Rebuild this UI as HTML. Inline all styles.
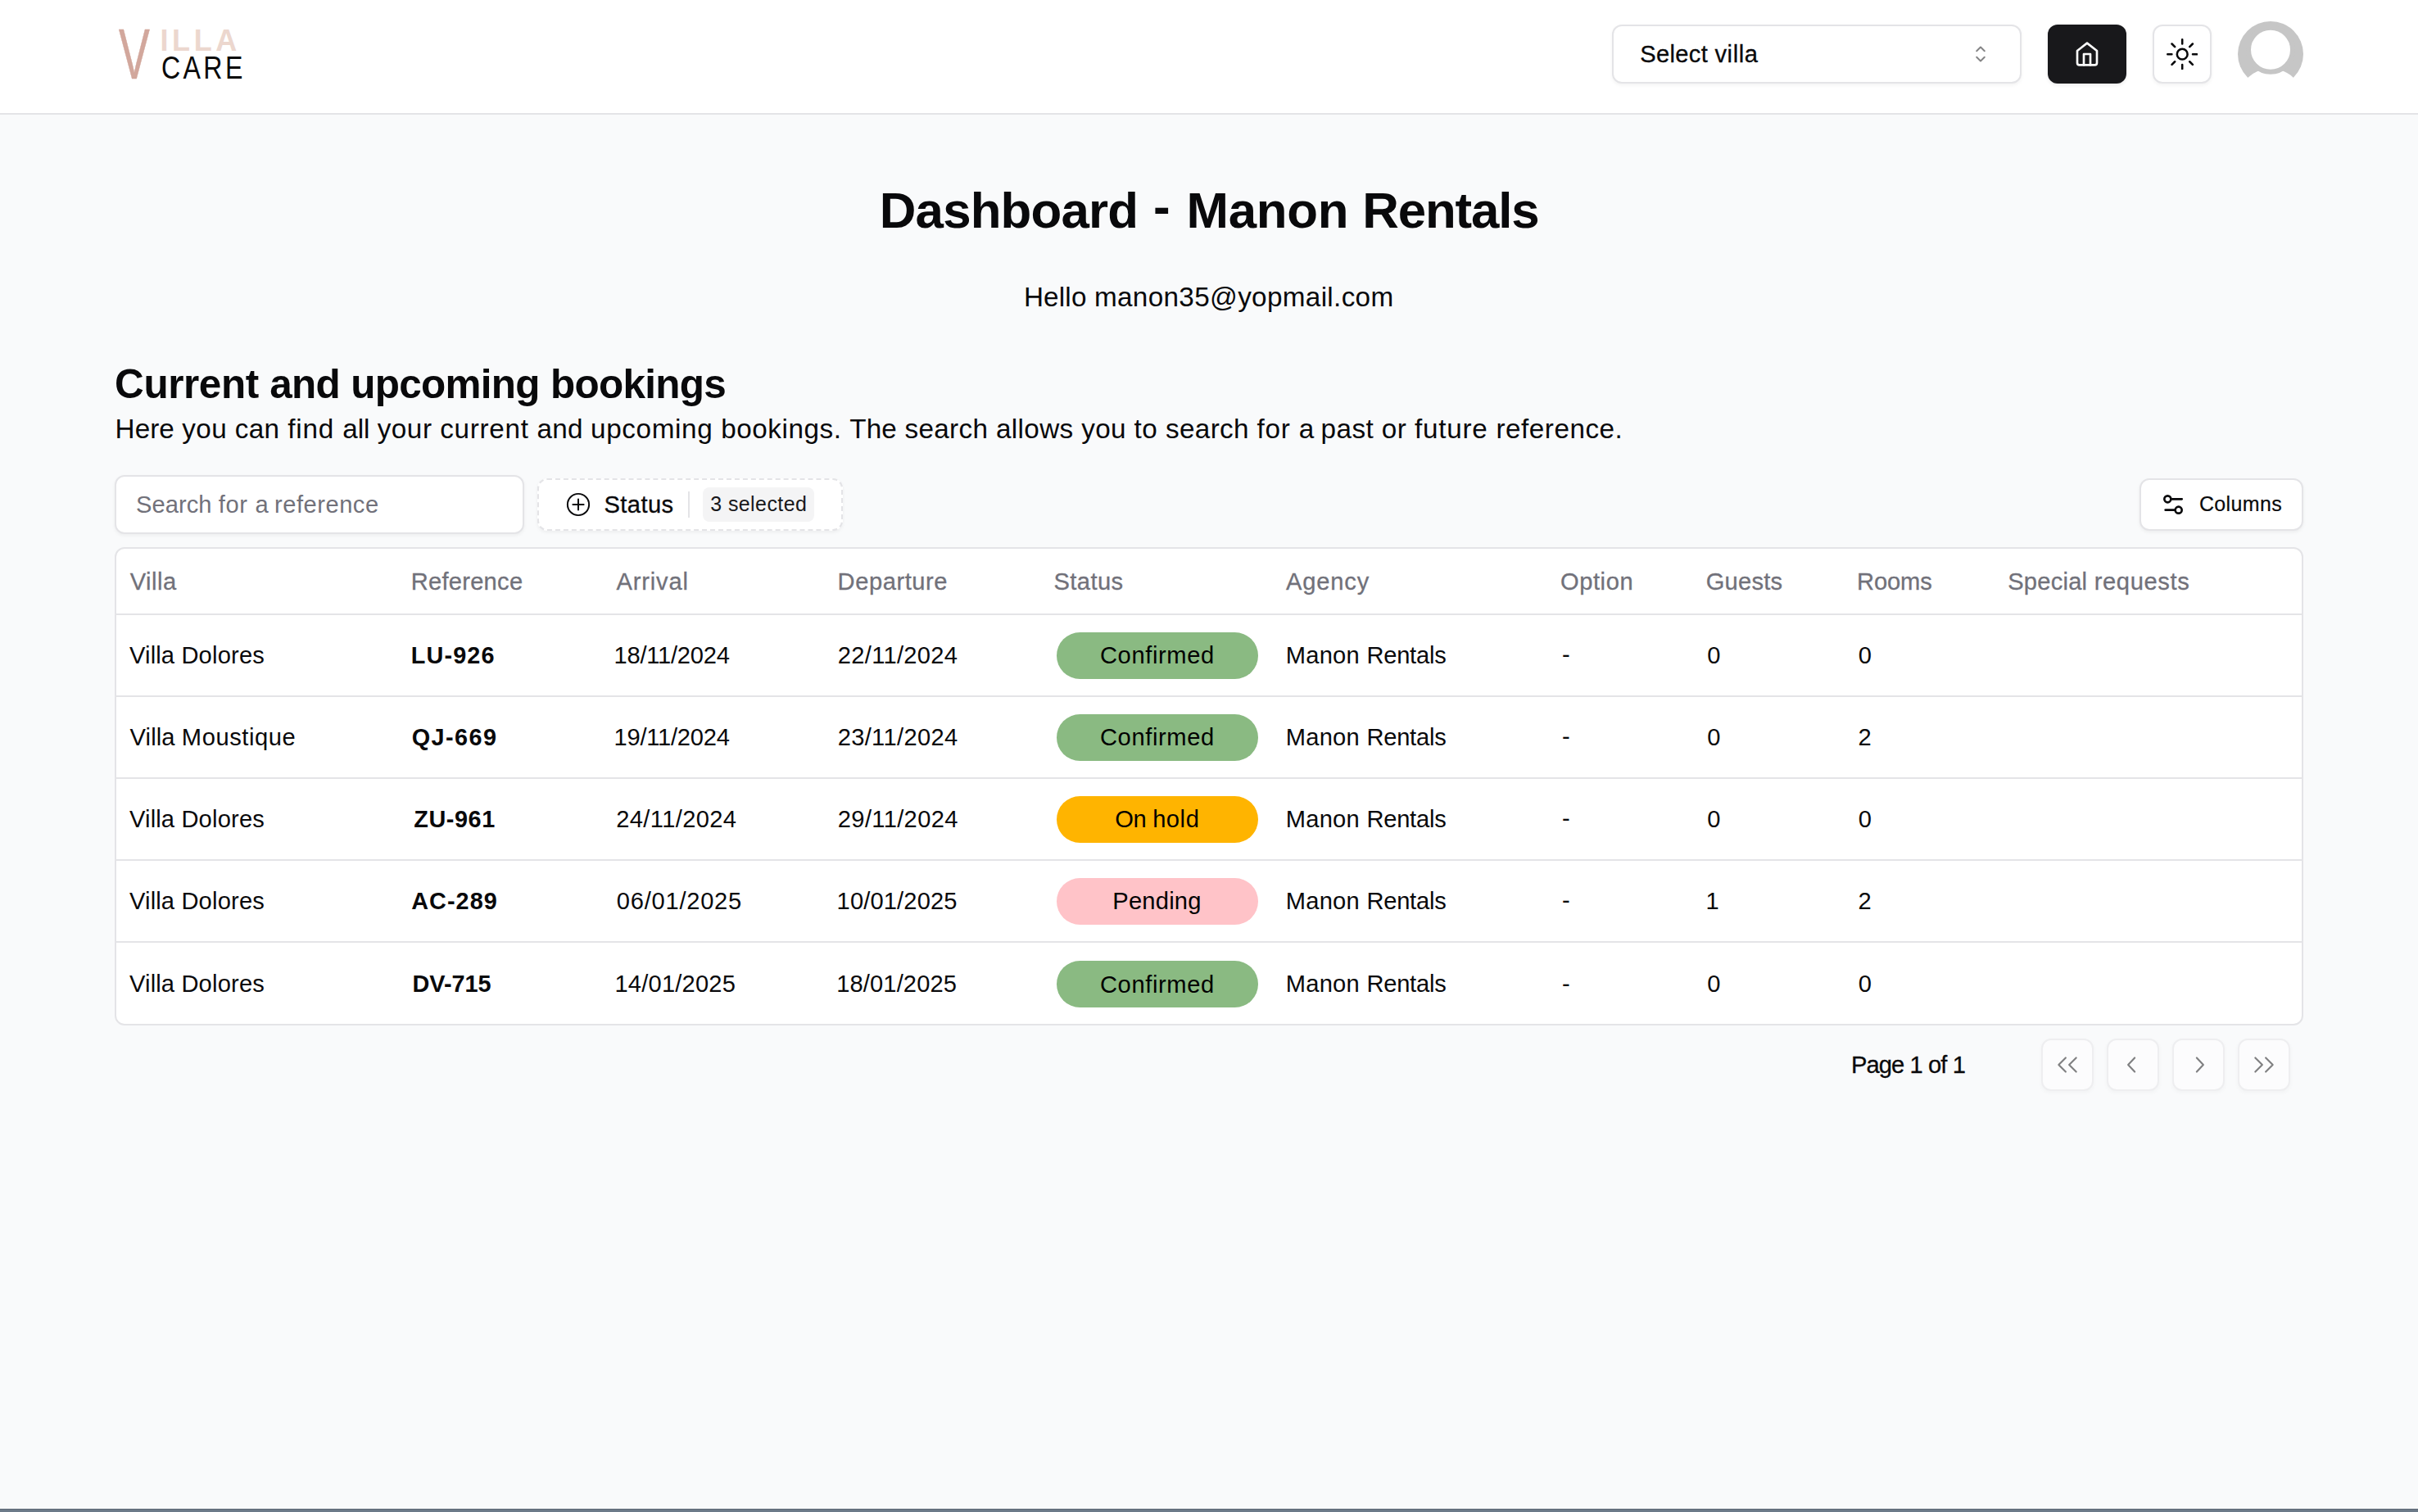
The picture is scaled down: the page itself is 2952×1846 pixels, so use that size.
<!DOCTYPE html>
<html lang="en">
<head>
<meta charset="utf-8">
<title>Dashboard - Manon Rentals</title>
<style>
*{box-sizing:border-box;}
html,body{margin:0;padding:0;}
body{width:2952px;height:1846px;overflow:hidden;background:#f9fafb;color:#09090b;font-family:"Liberation Sans", sans-serif;position:relative;-webkit-font-smoothing:antialiased;}
span{white-space:nowrap;}
.abs{position:absolute;}
header.top{position:absolute;left:0;top:0;width:2952px;height:140px;background:#fff;border-bottom:2px solid #e4e4e7;}
.logo{position:absolute;left:0;top:0;width:420px;height:138px;font-family:"Liberation Sans",sans-serif;}
.logo .v{position:absolute;left:144.5px;top:15.5px;font-size:88px;line-height:100px;color:#d2a79c;-webkit-text-stroke:.6px #d2a79c;transform:scaleX(.645);transform-origin:0 0;font-weight:400;}
.logo .illa{position:absolute;left:195.5px;top:25px;font-size:36px;line-height:50px;font-weight:700;color:#ecd7ce;letter-spacing:4.6px;}
.logo .care{position:absolute;left:196.5px;top:56.8px;font-size:38px;line-height:52px;font-weight:400;color:#0a0a0a;letter-spacing:4px;transform:scaleX(.845);transform-origin:0 0;}
.select{position:absolute;left:1968px;top:30px;width:500px;height:72px;border:2px solid #e4e4e7;border-radius:12px;background:#fff;box-shadow:0 2px 4px rgba(0,0,0,.05);display:flex;align-items:center;justify-content:space-between;padding:0 32px;line-height:40px;}
.select svg{width:32px;height:32px;opacity:.5;flex:none;}
.btn-home{position:absolute;left:2500px;top:30px;width:96px;height:72px;border-radius:12px;background:#18181b;box-shadow:0 2px 4px rgba(0,0,0,.08);display:flex;align-items:center;justify-content:center;}
.btn-home svg{width:32px;height:32px;}
.btn-sun{position:absolute;left:2628px;top:30px;width:72px;height:72px;border-radius:12px;background:#fff;border:2px solid #e4e4e7;box-shadow:0 2px 4px rgba(0,0,0,.05);display:flex;align-items:center;justify-content:center;}
.btn-sun svg{width:38.4px;height:38.4px;}
.avatar{position:absolute;left:2732px;top:26px;width:80px;height:80px;}
.avatar svg{display:block;width:80px;height:80px;overflow:visible;}

h1{position:absolute;left:0;top:220px;width:2952px;margin:0;text-align:center;line-height:72px;font-size:60px;font-weight:600;}
p.hello{position:absolute;left:0;top:339px;width:2952px;margin:0;text-align:center;line-height:48px;font-size:32px;}
h2{position:absolute;left:140px;top:435.5px;margin:0;line-height:64px;font-size:48px;font-weight:600;white-space:nowrap;}
p.desc{position:absolute;left:140px;top:499.5px;margin:0;line-height:48px;font-size:32px;white-space:nowrap;}

.search{position:absolute;left:140px;top:580px;width:500px;height:72px;border:2px solid #e4e4e7;border-radius:12px;background:#fff;box-shadow:0 2px 4px rgba(0,0,0,.05);padding:0 24px;display:flex;align-items:center;color:#71717a;line-height:40px;}
.btn-status{position:absolute;left:656px;top:584px;width:373px;height:64px;border:2px dashed #e4e4e7;border-radius:12px;background:#fff;box-shadow:0 2px 4px rgba(0,0,0,.05);display:flex;align-items:center;padding:0 0 0 32px;line-height:40px;}
.btn-status svg{width:32px;height:32px;flex:none;margin-right:16px;}
.btn-status .sep{width:2px;height:32px;background:#e4e4e7;margin:0 16px 0 17px;flex:none;}
.btn-status .badge{height:42px;width:136px;border-radius:8px;background:#f4f4f5;display:flex;align-items:center;justify-content:center;line-height:32px;color:#18181b;}
.btn-cols{position:absolute;left:2612px;top:584px;width:200px;height:64px;border:2px solid #e4e4e7;border-radius:12px;background:#fff;box-shadow:0 2px 4px rgba(0,0,0,.05);display:flex;align-items:center;padding:0 0 0 23px;line-height:32px;}
.btn-cols svg{width:32px;height:32px;flex:none;margin-right:16px;}

.tablewrap{position:absolute;left:140px;top:668px;width:2672px;height:584px;border:2px solid #e4e4e7;border-radius:12px;background:#fff;overflow:hidden;}
table{border-collapse:collapse;table-layout:fixed;width:2668px;font-size:28px;line-height:40px;}
th,td{padding:0 0 0 16px;text-align:left;font-weight:400;vertical-align:middle;overflow:visible;white-space:nowrap;}
thead tr{height:80px;border-bottom:2px solid #e4e4e7;}
th{color:#71717a;font-weight:500;height:80px;}
tbody tr{height:100px;border-bottom:2px solid #e4e4e7;}
tbody td{height:100px;}
tbody tr:last-child{border-bottom:0;}
tbody tr:last-child td{padding-top:2px;}
.pill{display:flex;align-items:center;justify-content:center;width:246px;height:57px;border-radius:29px;margin-left:3px;color:#000;line-height:40px;}
.pill.conf{background:#8aba82;}
.pill.hold{background:#ffb400;}
.pill.pend{background:#ffc3c8;}

.pager-label{position:absolute;left:2257.7px;top:1279.5px;line-height:40px;}
.pbtn{position:absolute;top:1268px;width:64px;height:64px;border:2px solid #e4e4e7;border-radius:12px;background:#fff;box-shadow:0 2px 4px rgba(0,0,0,.05);display:flex;align-items:center;justify-content:center;opacity:.5;}
.pbtn svg{width:32px;height:32px;}
.bottombar{position:absolute;left:0;top:1842px;width:2952px;height:4px;background:#6c7a89;border-top:1px solid #5e6975;}
.k-sel{font-size:29.12px;font-weight:400;-webkit-text-stroke:0.3px currentColor;position:relative;left:0.25px;top:-0.26px;}
.k-title{font-size:61.8px;font-weight:700;position:relative;left:0.16px;top:0.88px;}
.k-hello{font-size:33.28px;font-weight:400;position:relative;left:-0.32px;top:0.26px;}
.k-h2{font-size:49.44px;font-weight:700;position:relative;left:0.08px;top:1.3px;}
.k-desc{font-size:33.28px;font-weight:400;position:relative;left:0.62px;top:-0.0px;}
.k-ph{font-size:29.12px;font-weight:400;position:relative;left:-0.08px;top:0.26px;}
.k-status{font-size:29.12px;font-weight:400;letter-spacing:0.43px;-webkit-text-stroke:0.3px currentColor;position:relative;left:-0.5px;top:-0.26px;}
.k-sel3{font-size:24.96px;font-weight:400;position:relative;left:0.22px;top:-0.66px;}
.k-cols{font-size:24.96px;font-weight:400;letter-spacing:0.4px;-webkit-text-stroke:0.2px currentColor;position:relative;left:-0.1px;top:-0.92px;}
.k-th_villa{font-size:29.12px;font-weight:400;letter-spacing:0.487px;-webkit-text-stroke:0.3px currentColor;position:relative;left:0.7px;top:0.9px;}
.k-th_ref{font-size:29.12px;font-weight:400;letter-spacing:0.267px;-webkit-text-stroke:0.3px currentColor;position:relative;left:-1.36px;top:1.16px;}
.k-th_arr{font-size:29.12px;font-weight:400;letter-spacing:0.81px;-webkit-text-stroke:0.3px currentColor;position:relative;left:0.6px;top:0.9px;}
.k-th_dep{font-size:29.12px;font-weight:400;letter-spacing:0.568px;-webkit-text-stroke:0.3px currentColor;position:relative;left:-0.46px;top:0.9px;}
.k-th_status{font-size:29.12px;font-weight:400;letter-spacing:0.43px;-webkit-text-stroke:0.3px currentColor;position:relative;left:-0.5px;top:0.64px;}
.k-th_agency{font-size:29.12px;font-weight:400;letter-spacing:0.82px;-webkit-text-stroke:0.3px currentColor;position:relative;left:-0.0px;top:0.9px;}
.k-th_option{font-size:29.12px;font-weight:400;letter-spacing:0.56px;-webkit-text-stroke:0.3px currentColor;position:relative;left:-0.5px;top:0.9px;}
.k-th_guests{font-size:29.12px;font-weight:400;letter-spacing:0.242px;-webkit-text-stroke:0.3px currentColor;position:relative;left:-0.8px;top:0.64px;}
.k-th_rooms{font-size:29.12px;font-weight:400;letter-spacing:-0.134px;-webkit-text-stroke:0.3px currentColor;position:relative;left:-0.95px;top:0.9px;}
.k-th_special{font-size:29.12px;font-weight:400;-webkit-text-stroke:0.3px currentColor;position:relative;left:0.18px;top:0.9px;}
.k-v_dol{font-size:29.12px;font-weight:400;position:relative;left:0.12px;top:-0.0px;}
.k-v_mou{font-size:29.12px;font-weight:400;position:relative;left:0.6px;top:-0.0px;}
.k-r1{font-size:28.84px;font-weight:700;letter-spacing:1.099px;position:relative;left:-1.16px;top:0.3px;}
.k-r2{font-size:28.84px;font-weight:700;letter-spacing:1.414px;position:relative;left:-0.32px;top:0.3px;}
.k-r3{font-size:28.84px;font-weight:700;letter-spacing:0.57px;position:relative;left:2.24px;top:0.3px;}
.k-r4{font-size:28.84px;font-weight:700;letter-spacing:1.026px;position:relative;left:-0.74px;top:0.3px;}
.k-r5{font-size:28.84px;font-weight:700;letter-spacing:-0.049px;position:relative;left:0.55px;top:0.3px;}
.k-a1{font-size:29.12px;font-weight:400;letter-spacing:-0.239px;position:relative;left:-2.53px;top:0.3px;}
.k-a2{font-size:29.12px;font-weight:400;letter-spacing:-0.234px;position:relative;left:-2.53px;top:0.3px;}
.k-a3{font-size:29.12px;font-weight:400;letter-spacing:0.362px;position:relative;left:0.24px;top:0.3px;}
.k-a4{font-size:29.12px;font-weight:400;letter-spacing:0.741px;position:relative;left:0.84px;top:0.3px;}
.k-a5{font-size:29.12px;font-weight:400;letter-spacing:0.184px;position:relative;left:-1.52px;top:0.3px;}
.k-d1{font-size:29.12px;font-weight:400;letter-spacing:0.305px;position:relative;left:-0.24px;top:0.3px;}
.k-d2{font-size:29.12px;font-weight:400;letter-spacing:0.327px;position:relative;left:-0.33px;top:0.3px;}
.k-d3{font-size:29.12px;font-weight:400;letter-spacing:0.334px;position:relative;left:-0.16px;top:0.3px;}
.k-d4{font-size:29.12px;font-weight:400;letter-spacing:0.142px;position:relative;left:-1.45px;top:0.3px;}
.k-d5{font-size:29.12px;font-weight:400;letter-spacing:0.108px;position:relative;left:-1.75px;top:0.3px;}
.k-b_conf{font-size:29.12px;font-weight:400;letter-spacing:0.625px;position:relative;left:-0.08px;top:-0.0px;}
.k-b_hold{font-size:29.12px;font-weight:400;position:relative;left:-0.15px;top:-0.0px;}
.k-b_pend{font-size:29.12px;font-weight:400;letter-spacing:0.201px;position:relative;left:-0.54px;top:-0.0px;}
.k-agency{font-size:29.12px;font-weight:400;position:relative;left:-0.36px;top:-0.0px;}
.k-dash{font-size:29.12px;font-weight:400;position:relative;left:1.55px;top:-0.22px;}
.k-n0{font-size:29.12px;font-weight:400;position:relative;left:0.7px;top:0.15px;}
.k-n1{font-size:29.12px;font-weight:400;position:relative;left:-1.0px;top:0.15px;}
.k-n2{font-size:29.12px;font-weight:400;position:relative;left:0.5px;top:0.15px;}
.k-page{font-size:29.12px;font-weight:400;letter-spacing:-0.9px;-webkit-text-stroke:0.3px currentColor;position:relative;left:2.3px;top:0.36px;}
</style>
</head>
<body>
<header class="top">
  <div class="logo"><span class="v">V</span><span class="illa">ILLA</span><span class="care">CARE</span></div>
  <div class="select"><span class="k-sel"><span style="letter-spacing:0.315px">Select </span><span style="letter-spacing:0.6px">villa</span></span>
    <svg viewBox="0 0 15 15" fill="none" stroke="#09090b" stroke-width="0.9" stroke-linecap="round" stroke-linejoin="round"><path d="M5.25 5.75 7.5 3.5l2.25 2.25M5.25 9.25 7.5 11.5l2.25-2.25"/></svg>
  </div>
  <a class="btn-home"><svg viewBox="0 0 24 24" fill="none" stroke="#fafafa" stroke-width="2" stroke-linecap="round" stroke-linejoin="round"><path d="m3 9 9-7 9 7v11a2 2 0 0 1-2 2H5a2 2 0 0 1-2-2z"/><polyline points="9 22 9 12 15 12 15 22"/></svg></a>
  <div class="btn-sun"><svg viewBox="0 0 15 15" fill="none" stroke="#09090b" stroke-width="1" stroke-linecap="round"><circle cx="7.5" cy="7.5" r="2.5"/><path d="M7.5.5v2M7.5 12.5v2M.5 7.5h2M12.5 7.5h2M2.55 2.55l1.41 1.41M11.04 11.04l1.41 1.41M2.55 12.45l1.41-1.41M11.04 3.96l1.41-1.41"/></svg></div>
  <div class="avatar"><svg viewBox="0 0 80 80"><defs><clipPath id="avc"><circle cx="40" cy="40" r="41.5"/></clipPath></defs><circle cx="40" cy="40" r="40" fill="#c6c6c6"/><g clip-path="url(#avc)"><circle cx="40" cy="98" r="40.4" fill="#fff"/></g><circle cx="40" cy="34.7" r="27" fill="#fff" stroke="#c6c6c6" stroke-width="6"/></svg></div>
</header>

<main>
  <h1><span class="k-title"><span style="letter-spacing:-0.839px">Dashboard </span><span style="letter-spacing:2.648px;position:relative;top:-4.5px;left:2.5px">- </span><span style="letter-spacing:-0.232px">Manon </span><span style="letter-spacing:-1.154px">Rentals</span></span></h1>
  <p class="hello"><span class="k-hello"><span style="letter-spacing:0.177px">Hello </span><span style="letter-spacing:0.331px">manon35@yopmail.com</span></span></p>
  <h2><span class="k-h2"><span style="letter-spacing:-0.4px">Current </span><span style="letter-spacing:-0.664px">and </span><span style="letter-spacing:-0.681px">upcoming </span><span style="letter-spacing:-0.707px">bookings</span></span></h2>
  <p class="desc"><span class="k-desc"><span style="letter-spacing:0.05px">Here </span><span style="letter-spacing:0.395px">you </span><span style="letter-spacing:0.395px">can </span><span style="letter-spacing:0.841px">find </span><span style="letter-spacing:-0.016px">all </span><span style="letter-spacing:0.509px">your </span><span style="letter-spacing:0.689px">current </span><span style="letter-spacing:0.18px">and </span><span style="letter-spacing:0.646px">upcoming </span><span style="letter-spacing:0.527px">bookings. </span><span style="letter-spacing:0.164px">The </span><span style="letter-spacing:0.35px">search </span><span style="letter-spacing:0.353px">allows </span><span style="letter-spacing:0.395px">you </span><span style="letter-spacing:0.448px">to </span><span style="letter-spacing:0.35px">search </span><span style="letter-spacing:0.766px">for </span><span style="letter-spacing:-0.391px">a </span><span style="letter-spacing:0.422px">past </span><span style="letter-spacing:0.469px">or </span><span style="letter-spacing:0.717px">future </span><span style="letter-spacing:0.519px">reference.</span></span></p>

  <div class="search"><span class="k-ph"><span style="letter-spacing:0.067px">Search </span><span style="letter-spacing:0.672px">for </span><span style="letter-spacing:-0.336px">a </span><span style="letter-spacing:0.505px">reference</span></span></div>
  <div class="btn-status">
    <svg viewBox="0 0 15 15" fill="none" stroke="#09090b" stroke-width="0.92" stroke-linecap="round"><circle cx="7.5" cy="7.5" r="6.15"/><path d="M7.5 4.4v6.2M4.4 7.5h6.2"/></svg>
    <span class="k-status">Status</span><span class="sep"></span><span class="badge"><span class="k-sel3"><span style="letter-spacing:0.383px">3 </span><span style="letter-spacing:0.441px">selected</span></span></span>
  </div>
  <div class="btn-cols">
    <svg viewBox="0 0 24 24" fill="none" stroke="#09090b" stroke-width="2" stroke-linecap="round" stroke-linejoin="round"><path d="M20 7h-9"/><path d="M14 17H5"/><circle cx="17" cy="17" r="3"/><circle cx="7" cy="7" r="3"/></svg>
    <span class="k-cols">Columns</span>
  </div>

  <div class="tablewrap">
  <table>
    <colgroup><col style="width:345px"><col style="width:249px"><col style="width:271px"><col style="width:264px"><col style="width:283px"><col style="width:335.5px"><col style="width:178px"><col style="width:184.5px"><col style="width:183px"><col style="width:375px"></colgroup>
    <thead><tr><th><span class="k-th_villa">Villa</span></th><th><span class="k-th_ref">Reference</span></th><th><span class="k-th_arr">Arrival</span></th><th><span class="k-th_dep">Departure</span></th><th><span class="k-th_status">Status</span></th><th><span class="k-th_agency">Agency</span></th><th><span class="k-th_option">Option</span></th><th><span class="k-th_guests">Guests</span></th><th><span class="k-th_rooms">Rooms</span></th><th><span class="k-th_special"><span style="letter-spacing:0.24px">Special </span><span style="letter-spacing:0.643px">requests</span></span></th></tr></thead>
    <tbody>
      <tr><td><span class="k-v_dol"><span style="letter-spacing:0.115px">Villa </span><span style="letter-spacing:0.205px">Dolores</span></span></td><td><span class="k-r1">LU-926</span></td><td><span class="k-a1">18/11/2024</span></td><td><span class="k-d1">22/11/2024</span></td><td><div class="pill conf"><span class="k-b_conf">Confirmed</span></div></td><td><span class="k-agency"><span style="letter-spacing:0.279px">Manon </span><span style="letter-spacing:-0.234px">Rentals</span></span></td><td><span class="k-dash">-</span></td><td><span class="k-n0">0</span></td><td><span class="k-n0">0</span></td><td></td></tr>
      <tr><td><span class="k-v_mou"><span style="letter-spacing:0.115px">Villa </span><span style="letter-spacing:0.564px">Moustique</span></span></td><td><span class="k-r2">QJ-669</span></td><td><span class="k-a2">19/11/2024</span></td><td><span class="k-d2">23/11/2024</span></td><td><div class="pill conf"><span class="k-b_conf">Confirmed</span></div></td><td><span class="k-agency"><span style="letter-spacing:0.279px">Manon </span><span style="letter-spacing:-0.234px">Rentals</span></span></td><td><span class="k-dash">-</span></td><td><span class="k-n0">0</span></td><td><span class="k-n2">2</span></td><td></td></tr>
      <tr><td><span class="k-v_dol"><span style="letter-spacing:0.115px">Villa </span><span style="letter-spacing:0.205px">Dolores</span></span></td><td><span class="k-r3">ZU-961</span></td><td><span class="k-a3">24/11/2024</span></td><td><span class="k-d3">29/11/2024</span></td><td><div class="pill hold"><span class="k-b_hold"><span style="letter-spacing:-0.365px">On </span><span style="letter-spacing:0.559px">hold</span></span></div></td><td><span class="k-agency"><span style="letter-spacing:0.279px">Manon </span><span style="letter-spacing:-0.234px">Rentals</span></span></td><td><span class="k-dash">-</span></td><td><span class="k-n0">0</span></td><td><span class="k-n0">0</span></td><td></td></tr>
      <tr><td><span class="k-v_dol"><span style="letter-spacing:0.115px">Villa </span><span style="letter-spacing:0.205px">Dolores</span></span></td><td><span class="k-r4">AC-289</span></td><td><span class="k-a4">06/01/2025</span></td><td><span class="k-d4">10/01/2025</span></td><td><div class="pill pend"><span class="k-b_pend">Pending</span></div></td><td><span class="k-agency"><span style="letter-spacing:0.279px">Manon </span><span style="letter-spacing:-0.234px">Rentals</span></span></td><td><span class="k-dash">-</span></td><td><span class="k-n1">1</span></td><td><span class="k-n2">2</span></td><td></td></tr>
      <tr><td><span class="k-v_dol"><span style="letter-spacing:0.115px">Villa </span><span style="letter-spacing:0.205px">Dolores</span></span></td><td><span class="k-r5">DV-715</span></td><td><span class="k-a5">14/01/2025</span></td><td><span class="k-d5">18/01/2025</span></td><td><div class="pill conf"><span class="k-b_conf">Confirmed</span></div></td><td><span class="k-agency"><span style="letter-spacing:0.279px">Manon </span><span style="letter-spacing:-0.234px">Rentals</span></span></td><td><span class="k-dash">-</span></td><td><span class="k-n0">0</span></td><td><span class="k-n0">0</span></td><td></td></tr>
    </tbody>
  </table>
  </div>

  <div class="pager-label"><span class="k-page">Page 1 of 1</span></div>
  <div class="pbtn" style="left:2492px"><svg viewBox="0 0 15 15" fill="none" stroke="#09090b" stroke-width="1" stroke-linecap="round" stroke-linejoin="round"><path d="M6.5 3.5l-4 4 4 4M12.5 3.5l-4 4 4 4"/></svg></div>
  <div class="pbtn" style="left:2572px"><svg viewBox="0 0 15 15" fill="none" stroke="#09090b" stroke-width="1" stroke-linecap="round" stroke-linejoin="round"><path d="M8.5 3.5l-3.75 4 3.75 4"/></svg></div>
  <div class="pbtn" style="left:2652px"><svg viewBox="0 0 15 15" fill="none" stroke="#09090b" stroke-width="1" stroke-linecap="round" stroke-linejoin="round"><path d="M6.5 3.5l3.75 4-3.75 4"/></svg></div>
  <div class="pbtn" style="left:2732px"><svg viewBox="0 0 15 15" fill="none" stroke="#09090b" stroke-width="1" stroke-linecap="round" stroke-linejoin="round"><path d="M2.5 3.5l4 4-4 4M8.5 3.5l4 4-4 4"/></svg></div>
</main>
<div class="bottombar"></div>
</body>
</html>
